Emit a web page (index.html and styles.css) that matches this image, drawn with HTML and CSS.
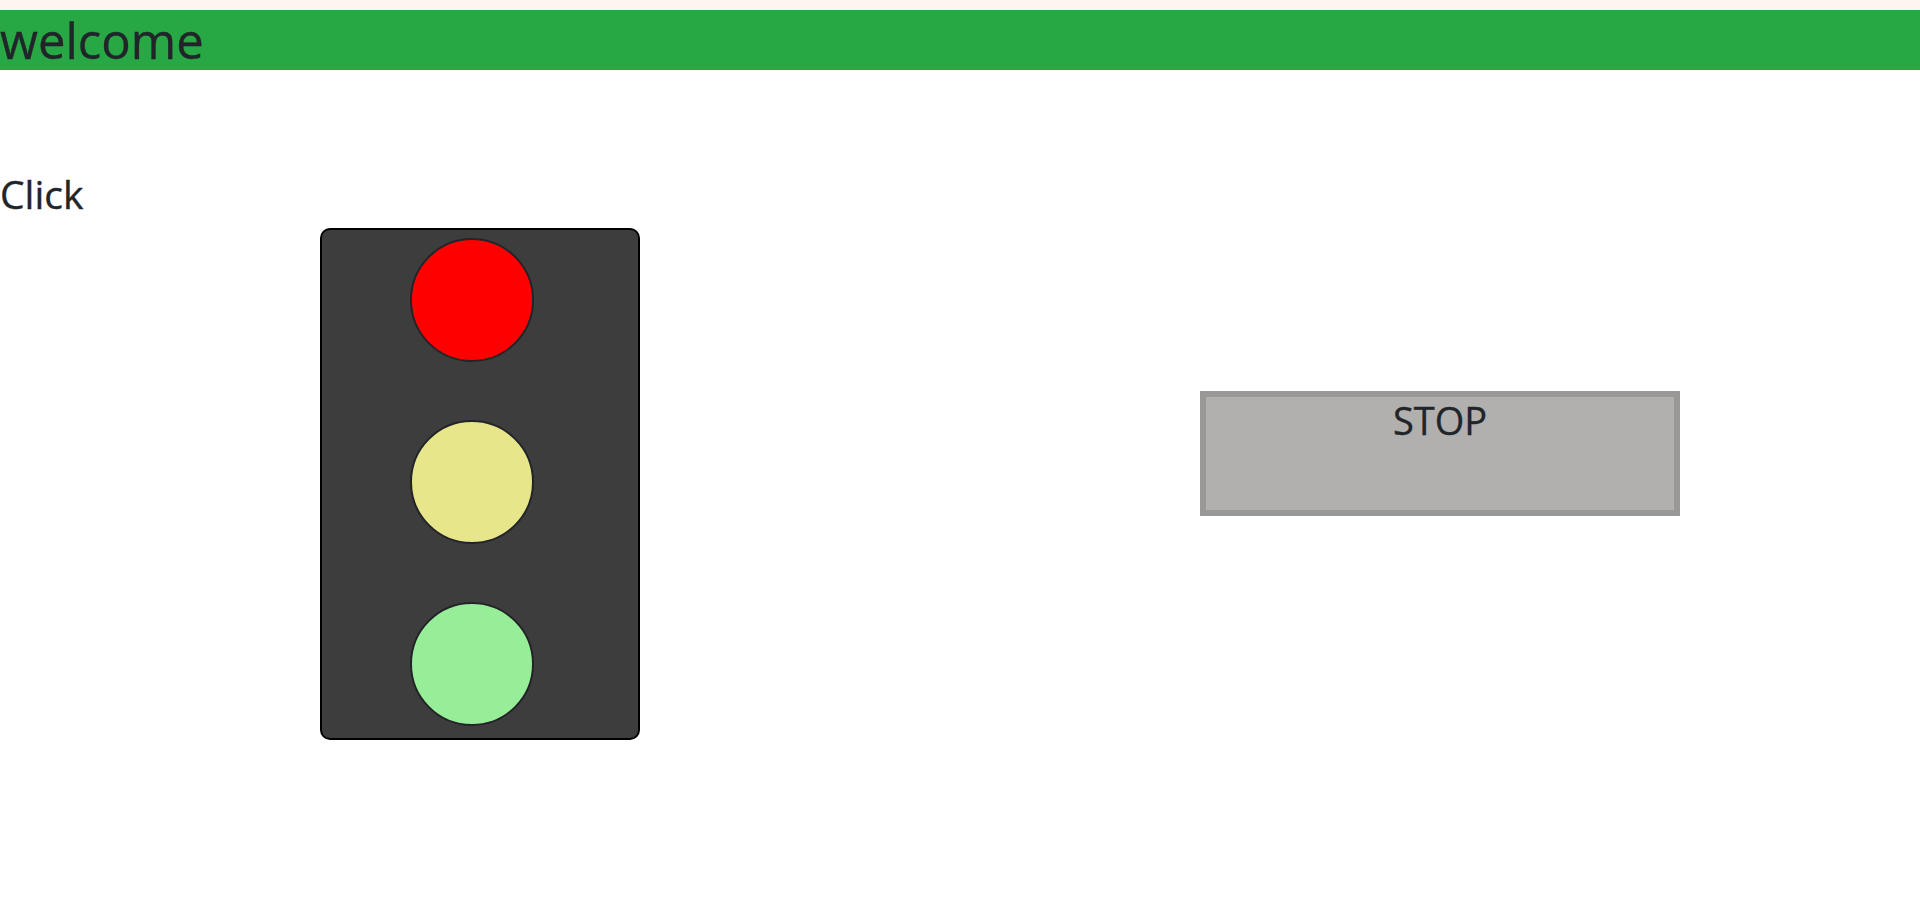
FILE: index.html
```html
<!DOCTYPE html>
<html>
<head>
<meta charset="utf-8">
<link rel="stylesheet" href="styles.css">
</head>
<body>
<div class="topband"></div>
<header class="banner">welcome</header>
<main class="content">
  <p class="click">Click</p>
  <div class="stage">
    <div class="light-box">
      <svg class="lamp" viewBox="0 0 124 124"><circle class="lamp-red" cx="62" cy="62" r="61"/></svg>
      <svg class="lamp" viewBox="0 0 124 124"><circle class="lamp-yellow" cx="62" cy="62" r="61"/></svg>
      <svg class="lamp" viewBox="0 0 124 124"><circle class="lamp-green" cx="62" cy="62" r="61"/></svg>
    </div>
    <div class="stop-box">STOP</div>
  </div>
</main>
</body>
</html>
```

FILE: styles.css
```css
html, body {
  margin: 0;
  padding: 0;
  background: #ffffff;
}
body {
  font-family: "Open Sans", "Noto Sans", sans-serif;
  color: #212529;
  -webkit-text-stroke: 0.35px #212529;
}
.topband {
  height: 10px;
  background: #fef5f0;
}
.banner {
  background: #28a745;
  height: 60px;
  line-height: 61px;
  font-size: 49px;
  white-space: nowrap;
}
.content {
  padding-top: 101px;
}
.click {
  margin: 0;
  font-size: 39px;
  line-height: 46px;
}
.stage {
  display: flex;
  align-items: flex-start;
  padding-left: 320px;
  margin-top: 11px;
}
.light-box {
  box-sizing: border-box;
  width: 320px;
  height: 512px;
  background: #3d3d3d;
  border: 2px solid #000;
  border-radius: 10px;
  display: flex;
  flex-direction: column;
  gap: 58px;
  padding-top: 8px;
  padding-left: 88px;
}
.lamp {
  display: block;
  width: 124px;
  height: 124px;
  flex: none;
}
.lamp circle {
  stroke: #232428;
  stroke-width: 2;
}
.lamp-red { fill: #ff0000; }
.lamp-yellow { fill: #e7e68a; }
.lamp-green { fill: #98ee98; }
.stop-box {
  box-sizing: border-box;
  width: 480px;
  height: 125px;
  margin-left: 560px;
  margin-top: 163px;
  background: #b1b0ae;
  border: 6px solid #999896;
  text-align: center;
  font-size: 38px;
  line-height: 46px;
}
```
